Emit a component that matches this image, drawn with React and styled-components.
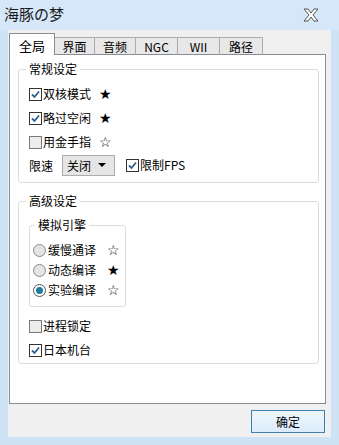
import styled, {createGlobalStyle} from "styled-components";

const GlobalStyle = createGlobalStyle`
  html, body {
    margin: 0;
    padding: 0;
  }
  body {
    font-family: "Noto Sans CJK SC", "Liberation Sans", sans-serif;
    font-size: 12px;
    color: #000;
  }
`;

const Window = styled.div`
  width: 339px;
  height: 445px;
  background: #cfe3f7;
  display: flex;
  flex-direction: column;
  overflow: hidden;
`;

const TitleBar = styled.div`
  height: 30px;
  display: flex;
  align-items: center;
  justify-content: space-between;
  padding: 0 20px 0 4px;
  background: #d5e7f8;
`;

const Title = styled.div`
  font-size: 15px;
  line-height: 20px;
  color: #1a1a1a;
  margin-top: -2px;
`;

const Client = styled.div`
  margin: 0 8px;
  height: 407px;
  background: #f0f0f0;
  display: flex;
  flex-direction: column;
  padding: 4px 0 0 1px;
  box-sizing: border-box;
`;

const TabStrip = styled.div`
  display: flex;
  align-items: flex-end;
  height: 21px;
  position: relative;
  z-index: 1;
  margin-bottom: -1px;
`;

const Tab = styled.div`
  width: ${(p) => p.$w}px;
  height: ${(p) => (p.$active ? 22 : 18)}px;
  box-sizing: border-box;
  border: 1px solid ${(p) => (p.$active ? "#898c95" : "#acacac")};
  border-bottom: ${(p) => (p.$active ? "none" : "1px solid #898c95")};
  border-left-width: ${(p) => (p.$first || p.$active ? 1 : 0)}px;
  background: ${(p) => (p.$active ? "#fff" : "#e8e8e8")};
  display: flex;
  align-items: center;
  justify-content: center;
  font-size: ${(p) => (p.$active ? 13 : 12)}px;
  font-family: "Noto Sans CJK SC", "Liberation Sans", sans-serif;
  padding-top: ${(p) => (p.$active ? 1 : 0)}px;
  color: #000;
`;

const Panel = styled.div`
  width: 317px;
  height: 350px;
  box-sizing: border-box;
  background: #fff;
  border: 1px solid #898c95;
  padding: 7px 0 0 8px;
`;

const Group = styled.fieldset`
  margin: ${(p) => p.$mt || 0}px 0 0 0;
  width: ${(p) => p.$w}px;
  box-sizing: border-box;
  border: 1px solid #dcdcdc;
  border-radius: 3px;
  padding: ${(p) => p.$pad};
  min-width: 0;
`;

const Legend = styled.legend`
  font-size: 12px;
  line-height: 14px;
  padding: 0 3px;
  margin-left: ${(p) => p.$ml || -3}px;
  color: #000;
`;

const Row = styled.div`
  height: ${(p) => p.$h || 24}px;
  display: flex;
  align-items: center;
  margin-top: ${(p) => p.$mt || 0}px;
`;

const Label = styled.label`
  display: flex;
  align-items: center;
  line-height: 14px;
  white-space: nowrap;
  margin-left: ${(p) => p.$ml || 0}px;
`;

const Box = styled.span`
  width: 13px;
  height: 13px;
  box-sizing: border-box;
  border: 1px solid ${(p) => (p.$on ? "#333" : "#7a7a7a")};
  background: ${(p) => (p.$on ? "#fff" : "#ececec")};
  margin-right: 1px;
  display: flex;
  align-items: center;
  justify-content: center;
`;

const Radio = styled.span`
  width: 13px;
  height: 13px;
  box-sizing: border-box;
  border-radius: 50%;
  border: 1px solid ${(p) => (p.$on ? "#555" : "#8a8a8a")};
  background: ${(p) => (p.$on ? "#fff" : "#e4e4e4")};
  margin-right: 2px;
  display: flex;
  align-items: center;
  justify-content: center;

  &::after {
    content: "";
    display: ${(p) => (p.$on ? "block" : "none")};
    width: 7px;
    height: 7px;
    border-radius: 50%;
    background: #1f7a9e;
  }
`;

const Star = styled.span`
  margin-left: ${(p) => p.$ml || 8}px;
  font-family: "DejaVu Sans", sans-serif;
  font-size: 14px;
  line-height: 14px;
`;

const Select = styled.div`
  width: 53px;
  height: 21px;
  box-sizing: border-box;
  margin-left: 9px;
  border: 1px solid #acacac;
  background: #e5e5e5;
  display: flex;
  align-items: center;
  justify-content: space-between;
  padding: 0 8px 0 4px;
`;

const Arrow = styled.span`
  width: 0;
  height: 0;
  border-left: 4px solid transparent;
  border-right: 4px solid transparent;
  border-top: 4px solid #000;
`;

const Footer = styled.div`
  display: flex;
  justify-content: flex-end;
  padding: 6px 6px 0 0;
`;

const Button = styled.button`
  width: 74px;
  height: 23px;
  box-sizing: border-box;
  border: 1px solid #3c7fb1;
  background: linear-gradient(#eef6fd, #dcecfb);
  font-family: "Noto Sans CJK SC", "Liberation Sans", sans-serif;
  font-size: 12px;
  color: #000;
  padding: 0;
`;

const CheckMark = () => (
  <svg width="9" height="9" viewBox="0 0 9 9">
    <path d="M1 4.5 L3.5 7 L8 1.5" fill="none" stroke="#2e5f8f" strokeWidth="1.8" />
  </svg>
);

const CloseIcon = () => (
  <svg width="16" height="14" viewBox="0 0 16 14">
    <path
      d="M1 1 H5 L8 5 L11 1 H15 L10 7 L15 13 H11 L8 9 L5 13 H1 L6 7 Z"
      fill="#fff"
      stroke="#555"
      strokeWidth="1"
      strokeLinejoin="round"
    />
  </svg>
);

const Check = ({on, text, star, starGap, ml}) => (
  <Label $ml={ml}>
    <Box $on={on}>{on && <CheckMark />}</Box>
    {text}
    {star && <Star $ml={starGap}>{star}</Star>}
  </Label>
);

const RadioItem = ({on, text, star}) => (
  <Label>
    <Radio $on={on} />
    {text}
    <Star $ml={11}>{star}</Star>
  </Label>
);

const tabs = [
  {name: "全局", w: 46, active: true},
  {name: "界面", w: 40},
  {name: "音频", w: 41},
  {name: "NGC", w: 42},
  {name: "WII", w: 42},
  {name: "路径", w: 43},
];

export default function App() {
  return (
    <>
      <GlobalStyle />
      <Window>
        <TitleBar>
          <Title>海豚の梦</Title>
          <CloseIcon />
        </TitleBar>
        <Client>
          <TabStrip>
            {tabs.map((t, i) => (
              <Tab key={t.name} $w={t.w} $active={t.active} $first={i === 0}>
                {t.name}
              </Tab>
            ))}
          </TabStrip>
          <Panel>
            <Group $w={301} $pad="6px 10px 6px 10px">
              <Legend>常规设定</Legend>
              <Row>
                <Check on text="双核模式" star="★" />
              </Row>
              <Row>
                <Check on text="略过空闲" star="★" />
              </Row>
              <Row>
                <Check text="用金手指" star="☆" />
              </Row>
              <Row $h={22}>
                限速
                <Select>
                  关闭
                  <Arrow />
                </Select>
                <Check on text="限制FPS" ml={11} />
              </Row>
            </Group>
            <Group $w={301} $mt={11} $pad="10px 10px 1px 10px">
              <Legend>高级设定</Legend>
              <Group $w={97} $pad="8px 3px 6px 3px">
                <Legend $ml={2}>模拟引擎</Legend>
                <Row $h={20}>
                  <RadioItem text="缓慢通译" star="☆" />
                </Row>
                <Row $h={20}>
                  <RadioItem text="动态编译" star="★" />
                </Row>
                <Row $h={20}>
                  <RadioItem on text="实验编译" star="☆" />
                </Row>
              </Group>
              <Row $mt={7}>
                <Check text="进程锁定" />
              </Row>
              <Row>
                <Check on text="日本机台" />
              </Row>
            </Group>
          </Panel>
          <Footer>
            <Button>确定</Button>
          </Footer>
        </Client>
      </Window>
    </>
  );
}
